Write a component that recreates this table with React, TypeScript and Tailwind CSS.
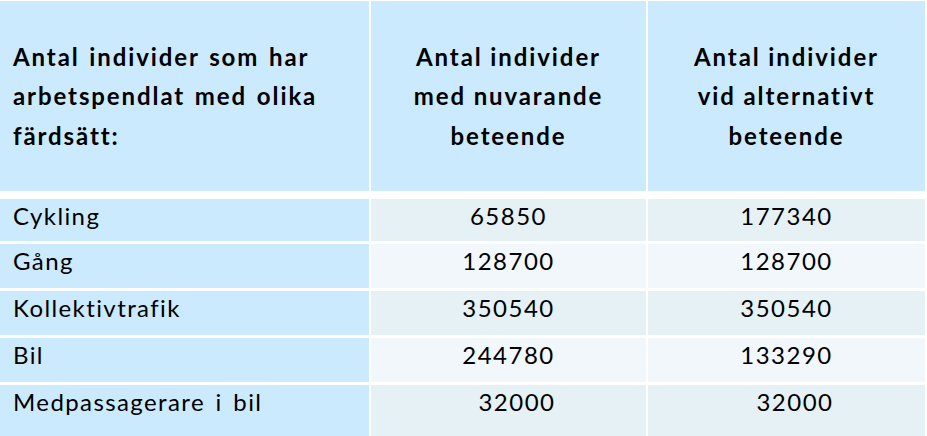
import React from "react";

const rows = [
  { label: "Cykling", a: "65850", b: "177340", shift: false, h: "h-[42px]", bg: "bg-[#e5f1f4]" },
  { label: "Gång", a: "128700", b: "128700", shift: false, h: "h-[44px]", bg: "bg-[#f1f7fa]" },
  { label: "Kollektivtrafik", a: "350540", b: "350540", shift: false, h: "h-[44px]", bg: "bg-[#e5f1f4]" },
  { label: "Bil", a: "244780", b: "133290", shift: false, h: "h-[44px]", bg: "bg-[#f1f7fa]" },
  { label: "Medpassagerare i bil", a: "32000", b: "32000", shift: true, h: "h-[52px]", bg: "bg-[#e5f1f4]" },
];

export default function App() {
  return (
    <div
      className="w-[927px] h-[436px] overflow-hidden bg-white pt-[1px] text-black"
      style={{ fontFamily: "Lato, 'Open Sans', sans-serif" }}
    >
      <div className="grid grid-cols-[369px_275px_277px] gap-x-[2px] h-[190px]">
        <div className="bg-[#cceafd] flex items-center pl-[13px] text-[24px] font-bold leading-[39.5px] tracking-[1.9px] [word-spacing:2px]">
          <div>
            Antal individer som har
            <br />
            arbetspendlat med olika
            <br />
            färdsätt:
          </div>
        </div>
        <div className="bg-[#cceafd] flex items-center justify-center text-center text-[24px] font-bold leading-[39.5px] tracking-[1.9px]">
          <div>
            Antal individer
            <br />
            med nuvarande
            <br />
            beteende
          </div>
        </div>
        <div className="bg-[#cceafd] flex items-center justify-center text-center text-[24px] font-bold leading-[39.5px] tracking-[1.9px]">
          <div>
            Antal individer
            <br />
            vid alternativt
            <br />
            beteende
          </div>
        </div>
      </div>
      <div className="flex flex-col gap-y-[3px] mt-[8px]">
        {rows.map((r) => (
          <div key={r.label} className={`grid grid-cols-[369px_275px_277px] gap-x-[2px] ${r.h}`}>
            <div className="bg-[#cceafd] pl-[13px] pt-[1px] text-[24px] leading-[32px] tracking-[1.4px] [word-spacing:3px]">{r.label}</div>
            <div className={`${r.bg} pt-[1px] text-center text-[24px] leading-[32px] tracking-[1.5px]`}>
              <span className={r.shift ? "pl-[17px]" : ""}>{r.a}</span>
            </div>
            <div className={`${r.bg} pt-[1px] text-center text-[24px] leading-[32px] tracking-[1.5px]`}>
              <span className={r.shift ? "pl-[17px]" : ""}>{r.b}</span>
            </div>
          </div>
        ))}
      </div>
    </div>
  );
}
